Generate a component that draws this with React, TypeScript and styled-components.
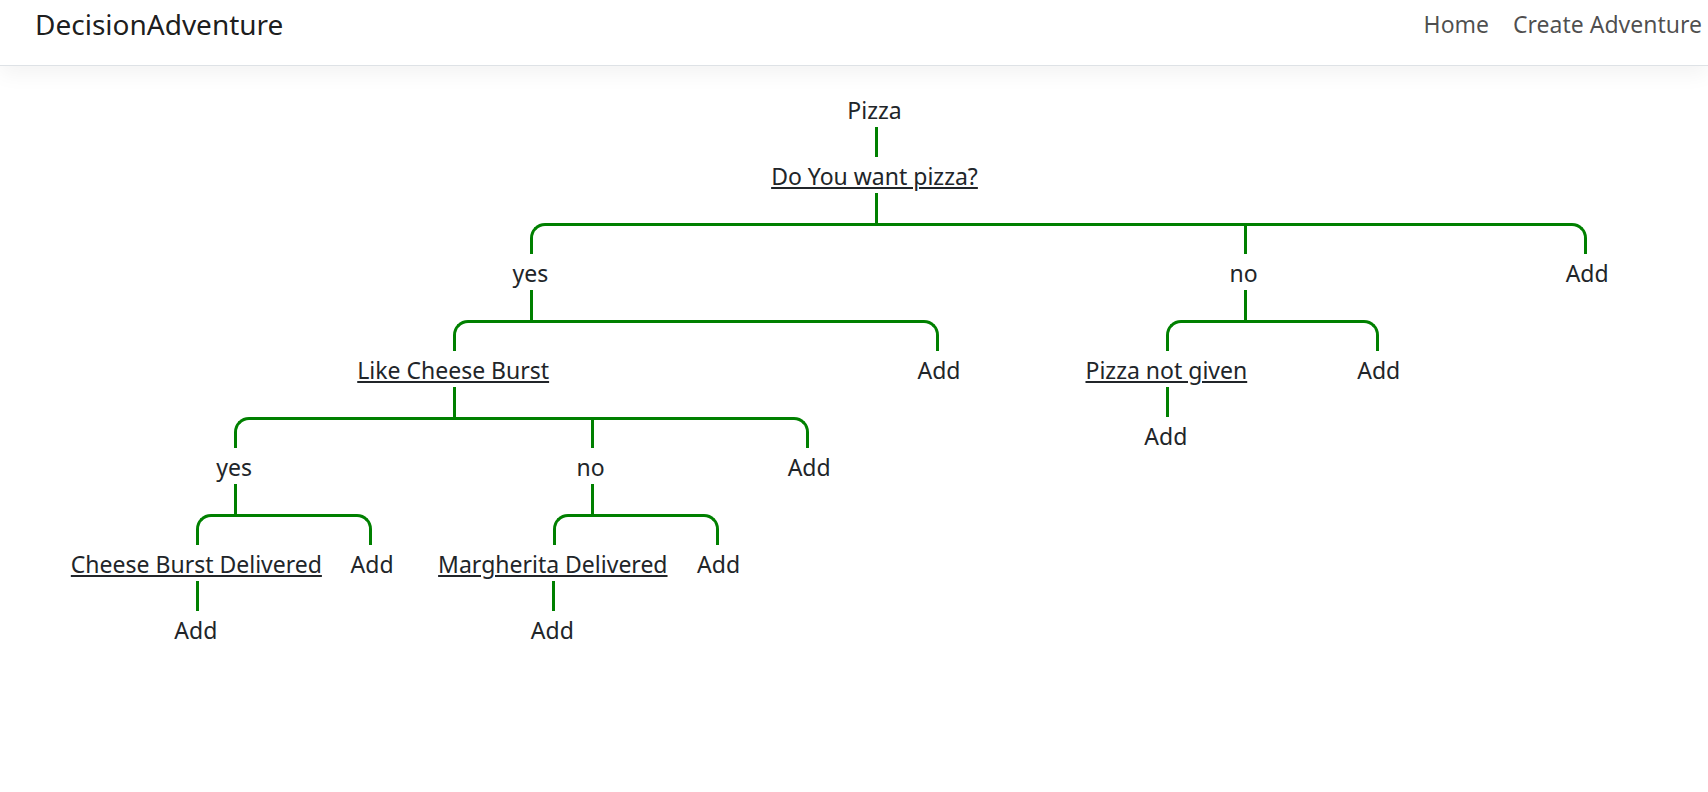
import React from "react";
import styled, { createGlobalStyle, css } from "styled-components";

const LINE = "3px solid #008000";

const GlobalStyle = createGlobalStyle`
  *, *::before, *::after { box-sizing: border-box; }
  body {
    margin: 0;
    background: #fff;
    color: #212529;
    font-family: "Segoe UI", "Noto Sans", "Open Sans", sans-serif;
    font-size: 23px;
    line-height: 36px;
    overflow-x: hidden;
  }
`;

const Header = styled.header`
  display: flex;
  justify-content: space-between;
  align-items: flex-start;
  height: 66px;
  padding: 6px 6px 0 35px;
  border-bottom: 1px solid #dee2e6;
  box-shadow: 0 8px 20px rgba(0, 0, 0, 0.05);
`;

const Brand = styled.a`
  color: rgba(0, 0, 0, 0.9);
  font-size: 28px;
  text-decoration: none;
`;

const NavLinks = styled.nav`
  display: flex;
  gap: 24px;
`;

const NavLink = styled.a`
  color: rgba(0, 0, 0, 0.7);
  text-decoration: none;
`;

const Chart = styled.main`
  margin: 25px -11px 0 30px;
`;

const Level = styled.ul<{ $nested?: boolean }>`
  display: flex;
  align-items: flex-start;
  width: 100%;
  margin: 0;
  padding: ${(p) => (p.$nested ? "0 8px 0 7px" : "0")};
  list-style: none;
`;

const Branch = styled.li`
  display: flex;
  flex: 1 1 auto;
  flex-direction: column;
  align-items: center;
`;

type Place = "only" | "first" | "middle" | "last";

const Connector = styled.div<{ $tall?: boolean }>`
  display: flex;
  width: 100%;
  height: ${(p) => (p.$tall ? 31 : 30)}px;
`;

const LeftHalf = styled.div<{ $place: Place }>`
  width: 50%;
  ${(p) => p.$place === "middle" && css`border-top: ${LINE};`}
  ${(p) =>
    p.$place === "last" &&
    css`
      border-top: ${LINE};
      border-right: ${LINE};
      border-top-right-radius: 15px;
    `}
`;

const RightHalf = styled.div<{ $place: Place }>`
  width: 50%;
  ${(p) => p.$place !== "last" && css`border-left: ${LINE};`}
  ${(p) => (p.$place === "first" || p.$place === "middle") && css`border-top: ${LINE};`}
  ${(p) => p.$place === "first" && css`border-top-left-radius: 15px;`}
`;

const Cell = styled.div<{ $width: number }>`
  display: flex;
  justify-content: center;
  width: ${(p) => p.$width}px;
  height: 36px;
  padding-top: 1px;
  white-space: nowrap;
`;

const QuestionLink = styled.a`
  color: inherit;
  text-decoration: underline;
  text-decoration-thickness: 2px;
  text-underline-offset: 2px;
`;

const AddButton = styled.button`
  padding: 0;
  border: 0;
  background: none;
  color: inherit;
  font: inherit;
  cursor: pointer;
`;

type TreeNode = {
  kind: "answer" | "question" | "add";
  text: string;
  width: number;
  children?: TreeNode[];
};

const add: TreeNode = { kind: "add", text: "Add", width: 59 };

const question = (text: string, width: number, children: TreeNode[] = []): TreeNode => ({
  kind: "question",
  text,
  width,
  children: [...children, add],
});

const answer = (text: string, next: TreeNode): TreeNode => ({
  kind: "answer",
  text,
  width: 59,
  children: [next, add],
});

const adventure: TreeNode = {
  kind: "answer",
  text: "Pizza",
  width: 68,
  children: [
    question("Do You want pizza?", 220, [
      answer(
        "yes",
        question("Like Cheese Burst", 201, [
          answer("yes", question("Cheese Burst Delivered", 261)),
          answer("no", question("Margherita Delivered", 241)),
        ])
      ),
      answer("no", question("Pizza not given", 177)),
    ]),
  ],
};

function Label({ node }: { node: TreeNode }) {
  if (node.kind === "question") return <QuestionLink href="#question">{node.text}</QuestionLink>;
  if (node.kind === "add") return <AddButton type="button">{node.text}</AddButton>;
  return <span>{node.text}</span>;
}

function placeOf(index: number, count: number): Place {
  if (count === 1) return "only";
  if (index === 0) return "first";
  return index === count - 1 ? "last" : "middle";
}

function Node({ node, place }: { node: TreeNode; place?: Place }) {
  const children = node.children ?? [];
  return (
    <Branch>
      {place && (
        <Connector $tall={place !== "only"}>
          <LeftHalf $place={place} />
          <RightHalf $place={place} />
        </Connector>
      )}
      <Cell $width={node.width}>
        <Label node={node} />
      </Cell>
      {children.length > 1 && (
        <Connector>
          <LeftHalf $place="only" />
          <RightHalf $place="only" />
        </Connector>
      )}
      {children.length > 0 && (
        <Level $nested={place !== undefined}>
          {children.map((child, i) => (
            <Node key={i} node={child} place={placeOf(i, children.length)} />
          ))}
        </Level>
      )}
    </Branch>
  );
}

export default function App() {
  return (
    <>
      <GlobalStyle />
      <Header>
        <Brand href="#home">DecisionAdventure</Brand>
        <NavLinks>
          <NavLink href="#home">Home</NavLink>
          <NavLink href="#create">Create Adventure</NavLink>
        </NavLinks>
      </Header>
      <Chart>
        <Level>
          <Node node={adventure} />
        </Level>
      </Chart>
    </>
  );
}
